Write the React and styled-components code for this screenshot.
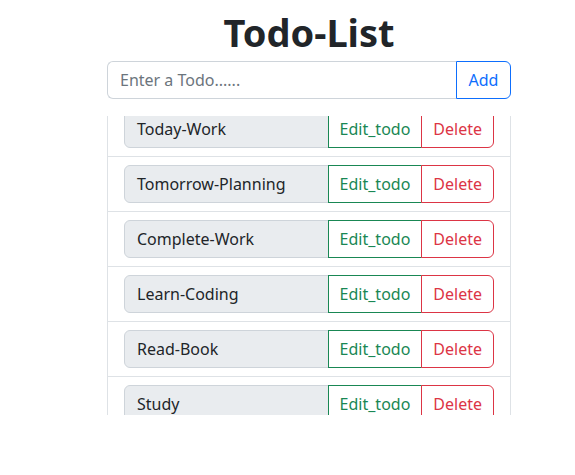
import React, { useEffect, useRef } from 'react';
import styled, { createGlobalStyle } from 'styled-components';

const GlobalStyle = createGlobalStyle`
    body{
        margin: 0;
        background: #fff;
        font-family: "Noto Sans", "Open Sans", sans-serif;
        color: #212529;
    }
`

const Page = styled.div`
    width: 404px;
    margin-left: 107px;
    padding-top: 8px;
`

const Title = styled.h1`
    margin: 0 0 5px 0;
    font-size: 38px;
    line-height: 48px;
    font-weight: 700;
    text-align: center;
`

const InputGroup = styled.div`
    display: flex;
    height: 38px;
`

const TodoInput = styled.input`
    flex: 1;
    min-width: 0;
    border: 1px solid #ced4da;
    border-right: none;
    border-radius: 6px 0 0 6px;
    padding: 0 12px;
    font-family: inherit;
    font-size: 16px;
    color: #212529;
    outline: none;
    &::placeholder{
        color: #6c757d;
    }
`

const OutlineButton = styled.button`
    background: #fff;
    border: 1px solid ${p => p.color};
    color: ${p => p.color};
    font-family: inherit;
    font-size: 16px;
    padding: 0 11px;
    height: 38px;
    border-radius: ${p => p.radius || '0'};
    margin-left: ${p => p.joined ? '-1px' : '0'};
    cursor: pointer;
`

const AddButton = styled(OutlineButton)`
    width: 55px;
    padding: 0;
`

const ListBox = styled.div`
    margin-top: 17px;
    height: 299px;
    overflow: hidden;
    border-left: 1px solid #dee2e6;
    border-right: 1px solid #dee2e6;
`

const List = styled.ul`
    list-style: none;
    margin: 0;
    padding: 0;
`

const Item = styled.li`
    padding: 8px 16px;
    border-top: 1px solid #dee2e6;
    &:first-child{
        border-top: none;
    }
`

const Row = styled.div`
    display: flex;
    height: 38px;
`

const TodoText = styled.div`
    flex: 1;
    display: flex;
    align-items: center;
    padding: 0 12px;
    background: #e9ecef;
    border: 1px solid #ced4da;
    border-radius: 6px 0 0 6px;
    font-size: 16px;
`

const todos = ['Today-Work', 'Tomorrow-Planning', 'Complete-Work', 'Learn-Coding', 'Read-Book', 'Study'];

export default function App() {
    const box = useRef(null);
    useEffect(() => {
        if (box.current) box.current.scrollTop = 14;
    }, []);
    return (
        <Page>
            <GlobalStyle />
            <Title>Todo-List</Title>
            <InputGroup>
                <TodoInput placeholder="Enter a Todo......" />
                <AddButton color="#0d6efd" radius="0 6px 6px 0">Add</AddButton>
            </InputGroup>
            <ListBox ref={box}>
                <List>
                    {todos.map(t => (
                        <Item key={t}>
                            <Row>
                                <TodoText>{t}</TodoText>
                                <OutlineButton color="#198754" joined>Edit_todo</OutlineButton>
                                <OutlineButton color="#dc3545" joined radius="0 6px 6px 0">Delete</OutlineButton>
                            </Row>
                        </Item>
                    ))}
                </List>
            </ListBox>
        </Page>
    );
}
